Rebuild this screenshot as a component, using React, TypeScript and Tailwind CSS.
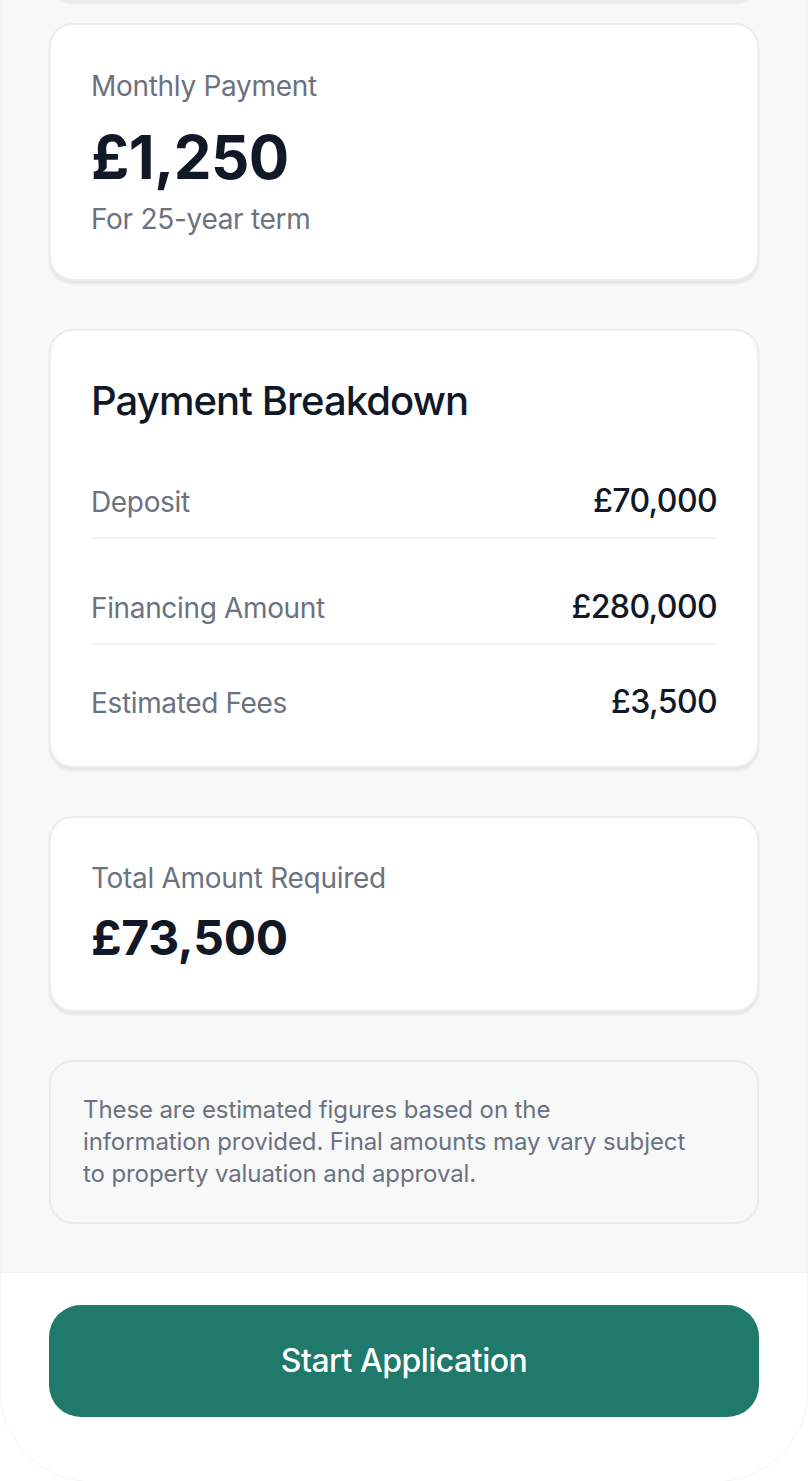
import React from 'react';

const rows = [
  { label: 'Deposit', value: '£70,000', gap: 'mt-[48px]', divider: true },
  { label: 'Financing Amount', value: '£280,000', gap: 'mt-[44px]', divider: true },
  { label: 'Estimated Fees', value: '£3,500', gap: 'mt-[33px]', divider: false },
];

function Card({ children, className = '' }: { children: React.ReactNode; className?: string }) {
  return (
    <div
      className={`bg-white rounded-[24px] border-2 border-[#eaecef] shadow-[0_3px_3px_rgba(0,0,0,0.08)] px-[40px] py-[40px] ${className}`}
    >
      {children}
    </div>
  );
}

export default function App() {
  return (
    <div className="min-h-screen bg-white font-['Inter','Noto_Sans',sans-serif]">
      <div className="overflow-hidden rounded-b-[92px] border-x border-b border-[#f3f4f5]">
        <main className="bg-[#f7f8f8] px-12 pb-[48px]">
          {/* card scrolled off the top */}
          <div className="-mt-[60px] h-[62px] bg-white rounded-b-[24px] border-2 border-t-0 border-[#eaecef] shadow-[0_2px_3px_rgba(0,0,0,0.06)]" />

          <Card className="mt-[21px]">
            <p className="text-[28px] leading-[40px] tracking-[-0.3px] text-[#6b7280] translate-y-[1px]">Monthly Payment</p>
            <p className="mt-4 text-[60px] leading-[72px] font-bold text-[#111827] tracking-[-0.5px]">£1,250</p>
            <p className="mt-1.5 text-[28px] leading-[40px] tracking-[-0.3px] text-[#6b7280]">For 25-year term</p>
          </Card>

          <Card className="mt-12">
            <h2 className="mt-[2px] text-[40px] leading-[56px] tracking-[-0.9px] font-medium text-[#111827]">
              Payment Breakdown
            </h2>
            {rows.map((row) => (
              <div
                key={row.label}
                className={`${row.gap} flex items-baseline justify-between ${row.divider ? 'pb-3 border-b-2 border-[#f2f3f5]' : ''}`}
              >
                <span className="text-[28px] leading-[40px] tracking-[-0.35px] text-[#6b7280]">{row.label}</span>
                <span className="text-[32px] leading-[48px] tracking-[-0.6px] font-medium text-[#111827]">{row.value}</span>
              </div>
            ))}
          </Card>

          <Card className="mt-12">
            <p className="text-[28px] leading-[40px] tracking-[-0.3px] text-[#6b7280]">Total Amount Required</p>
            <p className="mt-2 text-[48px] leading-[64px] font-bold tracking-[-0.3px] text-[#111827]">£73,500</p>
          </Card>

          <div className="mt-12 rounded-[24px] border-2 border-[#e8eaed] bg-[#f7f8f8] px-8 py-8">
            <p className="text-[24px] leading-[32px] tracking-[-0.1px] text-[#6b7280]">
              These are estimated figures based on the
              <br />
              information provided. Final amounts may vary subject
              <br />
              to property valuation and approval.
            </p>
          </div>
        </main>

        <footer className="bg-white border-t border-[#f0f1f2] px-12 pt-[32px] pb-[64px]">
          <button className="w-full h-[112px] rounded-[32px] bg-[#1f7a6b] text-white text-[32px] tracking-[-0.5px] font-medium">
            Start Application
          </button>
        </footer>
      </div>
    </div>
  );
}
